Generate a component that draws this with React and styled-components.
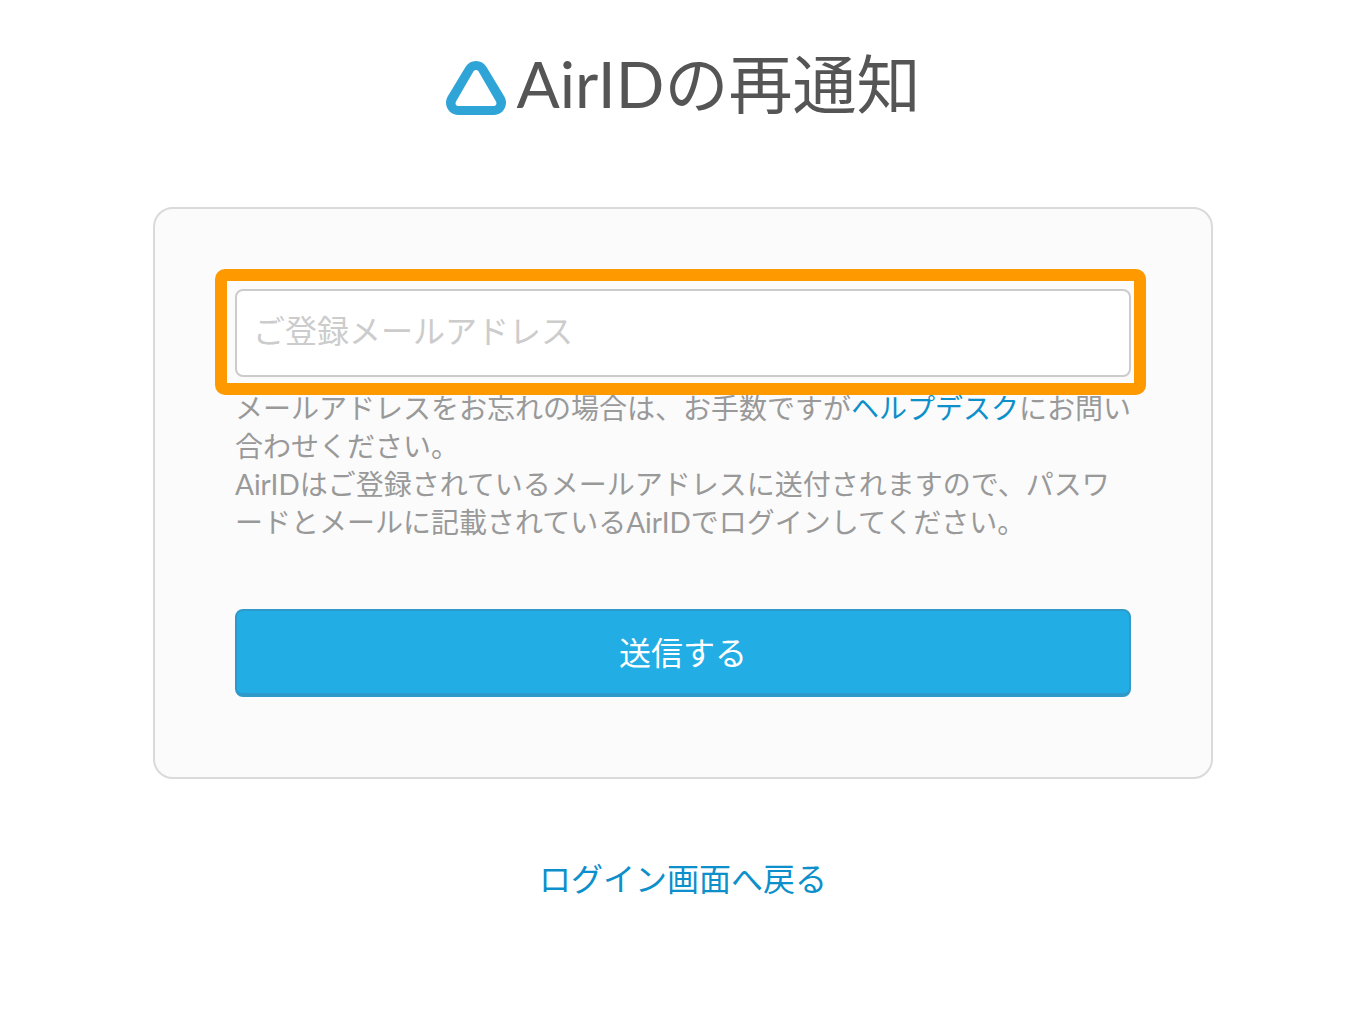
import React, { useState } from "react";
import styled, { createGlobalStyle, ThemeProvider } from "styled-components";

const theme = {
  page: "#ffffff",
  card: "#fbfbfb",
  cardBorder: "#dadada",
  inputBorder: "#cccccc",
  placeholder: "#cccccc",
  heading: "#555555",
  text: "#999999",
  link: "#0c8fca",
  primary: "#22ade5",
  primaryBorder: "#2f9aca",
  logo: "#2ea4d7",
  highlight: "#ff9900",
};

const GlobalStyle = createGlobalStyle`
  * {
    box-sizing: border-box;
  }

  body {
    margin: 0;
    background-color: ${({ theme }) => theme.page};
    font-family: Lato, "Noto Sans CJK JP", sans-serif;
  }
`;

const Page = styled.main`
  display: flex;
  flex-direction: column;
  align-items: center;
  padding: 38px 24px 80px;
`;

const Header = styled.header`
  display: flex;
  align-items: center;
  justify-content: center;
  gap: 11px;
  margin-bottom: 73px;
`;

const Logo = styled.svg`
  width: 60px;
  height: 54px;
  margin-top: 4px;
  flex-shrink: 0;
`;

const Title = styled.h1`
  margin: 0;
  padding-bottom: 4px;
  font-size: 64px;
  font-weight: 400;
  line-height: 92px;
  color: ${({ theme }) => theme.heading};
`;

const Card = styled.form`
  width: 100%;
  max-width: 1060px;
  padding: 80px;
  border: 2px solid ${({ theme }) => theme.cardBorder};
  border-radius: 20px;
  background-color: ${({ theme }) => theme.card};

  @media (max-width: 768px) {
    padding: 40px 32px;
  }
`;

const Field = styled.div`
  position: relative;
  margin-bottom: 12px;

  &::after {
    content: "";
    position: absolute;
    inset: -20px -15px -18px -20px;
    border: 12px solid ${({ theme }) => theme.highlight};
    border-radius: 10px;
    pointer-events: none;
  }
`;

const Input = styled.input`
  display: block;
  width: 100%;
  height: 88px;
  padding: 0 16px 6px;
  border: 2px solid ${({ theme }) => theme.inputBorder};
  border-radius: 8px;
  background-color: ${({ theme }) => theme.page};
  color: ${({ theme }) => theme.heading};
  font-family: inherit;
  font-size: 32px;
  outline: none;

  &::placeholder {
    color: ${({ theme }) => theme.placeholder};
    opacity: 1;
  }
`;

const Note = styled.p`
  margin: 0 -4px 68px 0;
  font-size: 28px;
  line-height: 38px;
  line-break: loose;
  color: ${({ theme }) => theme.text};
`;

const Link = styled.a`
  color: ${({ theme }) => theme.link};
  text-decoration: none;

  &:hover {
    text-decoration: underline;
  }
`;

const SubmitButton = styled.button`
  display: block;
  width: 100%;
  height: 88px;
  padding: 0 0 2px;
  border: 2px solid ${({ theme }) => theme.primaryBorder};
  border-bottom-width: 4px;
  border-radius: 8px;
  background-color: ${({ theme }) => theme.primary};
  color: #fff;
  font-family: inherit;
  font-size: 32px;
  cursor: pointer;
`;

const BackLink = styled(Link)`
  margin-top: 76px;
  font-size: 32px;
  line-height: 48px;
`;

const App = () => {
  const [email, setEmail] = useState("");

  return (
    <ThemeProvider theme={theme}>
      <GlobalStyle />
      <Page lang="ja">
        <Header>
          <Logo viewBox="0 0 60 54" aria-hidden="true">
            <path
              fill={theme.logo}
              fillRule="evenodd"
              d="M30 0C34.500 0 38.200 2.200 40.500 6L58.300 35.500C59.400 37.500 60 39.500 60 41.500C60 48.500 54.500 54 47.500 54H12.500C5.500 54 0 48.500 0 41.500C0 39.500 .6 37.500 1.700 35.500L19.500 6C21.800 2.200 25.500 0 30 0ZM30 9C29 9 28 9.500 27.400 10.500L10 40.500C8.800 43 10 45 12.700 45H47.300C50 45 51.200 43 50 40.500L32.600 10.500C32 9.500 31 9 30 9Z"
            />
          </Logo>
          <Title>AirIDの再通知</Title>
        </Header>

        <Card onSubmit={(e) => e.preventDefault()}>
          <Field>
            <Input
              type="email"
              aria-label="ご登録メールアドレス"
              placeholder="ご登録メールアドレス"
              value={email}
              onChange={(e) => setEmail(e.target.value)}
            />
          </Field>
          <Note>
            メールアドレスをお忘れの場合は、お手数ですが
            <Link href="#helpdesk">ヘルプデスク</Link>
            にお問い合わせください。
            <br />
            AirIDはご登録されているメールアドレスに送付されますので、パスワードとメールに記載されているAirIDでログインしてください。
          </Note>
          <SubmitButton type="submit">送信する</SubmitButton>
        </Card>

        <BackLink href="#login">ログイン画面へ戻る</BackLink>
      </Page>
    </ThemeProvider>
  );
};

export default App;
